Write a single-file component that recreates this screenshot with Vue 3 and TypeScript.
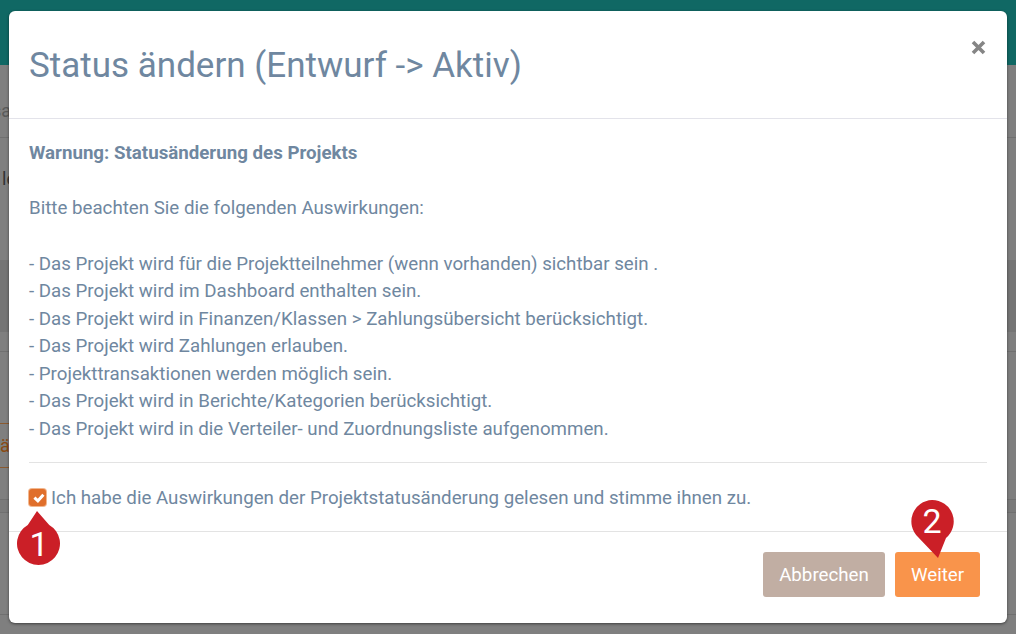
<script setup lang="ts">
const effects = [
  'Das Projekt wird für die Projektteilnehmer (wenn vorhanden) sichtbar sein .',
  'Das Projekt wird im Dashboard enthalten sein.',
  'Das Projekt wird in Finanzen/Klassen > Zahlungsübersicht berücksichtigt.',
  'Das Projekt wird Zahlungen erlauben.',
  'Projekttransaktionen werden möglich sein.',
  'Das Projekt wird in Berichte/Kategorien berücksichtigt.',
  'Das Projekt wird in die Verteiler- und Zuordnungsliste aufgenommen.',
]
</script>

<template>
  <div class="page">
    <div class="topbar"></div>
    <div class="backdrop-text">
      <div class="row row-a"><span>sa</span></div>
      <div class="row row-b"><span>le</span></div>
      <div class="row row-c"></div>
      <div class="row row-d"></div>
      <div class="row row-e"><span>ä</span></div>
      <div class="row row-f"></div>
      <div class="row row-g"></div>
      <div class="row row-h"></div>
    </div>

    <div class="modal">
      <header class="head">
        <h1>Status ändern (Entwurf -&gt; Aktiv)</h1>
        <svg class="close" viewBox="0 0 15 15" width="15" height="15">
          <path d="M2 2 L13 13 M13 2 L2 13" stroke="#858585" stroke-width="3.6" fill="none" />
        </svg>
      </header>

      <section class="body">
        <p class="warn">Warnung: Statusänderung des Projekts</p>
        <p class="line gap">Bitte beachten Sie die folgenden Auswirkungen:</p>
        <p v-for="item in effects" :key="item" class="line">- {{ item }}</p>
        <hr />
        <label class="check">
          <span class="box">
            <svg viewBox="0 0 17 17" width="17" height="17">
              <path d="M5.4 8.6 L8.9 11.8 L14.4 5.8" stroke="#fff" stroke-width="3" fill="none" />
            </svg>
          </span>
          <span>Ich habe die Auswirkungen der Projektstatusänderung gelesen und stimme ihnen zu.</span>
        </label>
      </section>

      <footer class="foot">
        <button class="btn cancel">Abbrechen</button>
        <button class="btn next">Weiter</button>
      </footer>

      <div class="pin pin-one">
        <svg viewBox="0 0 44 56" width="44" height="56">
          <path d="M20 1 L32.25 14.9 A21.5 21.5 0 1 1 10.75 14.9 Z" fill="#cb1f27" />
        </svg>
        <span>1</span>
      </div>
      <div class="pin pin-two">
        <svg viewBox="0 0 44 60" width="44" height="60">
          <path d="M22 1 A21.5 21.5 0 0 1 36 39 L28 59 L8 38 A21.5 21.5 0 0 1 22 1 Z" fill="#cb1f27" />
        </svg>
        <span>2</span>
      </div>
    </div>
  </div>
</template>

<style scoped>
.page {
  position: relative;
  width: 1016px;
  height: 634px;
  overflow: hidden;
  background: #7f7f7f;
  font-family: Roboto, "Liberation Sans", sans-serif;
}
.topbar {
  height: 65px;
  background: #106864;
}
.backdrop-text {
  color: #4a4a4a;
  font-size: 18px;
}
.row {
  border-bottom: 1px solid #707070;
  overflow: hidden;
}
.row span {
  display: block;
}
.row-a {
  height: 73px;
  padding-top: 35px;
  box-sizing: border-box;
  text-indent: -8px;
  color: #5a5a5a;
}
.row-b {
  height: 122px;
  padding-top: 30px;
  box-sizing: border-box;
  text-indent: 2px;
  color: #333;
  border-bottom: 0;
}
.row-c {
  height: 72px;
  background: #757575;
  border-bottom: 0;
}
.row-d {
  height: 19px;
}
.row-e {
  margin-top: 71px;
  height: 45px;
  border-bottom: 0;
}
.row-e span {
  width: 100px;
  height: 45px;
  padding-top: 11px;
  box-sizing: border-box;
  color: #8a4a14;
  border-top: 1px solid #8a5a30;
  border-bottom: 1px solid #8a5a30;
}
.row-f {
  height: 31px;
}
.row-g {
  height: 12px;
  background: #7a7a7a;
}
.row-h {
  height: 101px;
}
.modal {
  position: absolute;
  left: 9px;
  top: 11px;
  width: 998px;
  height: 612px;
  display: flex;
  flex-direction: column;
  background: #fff;
  border-radius: 6px;
  box-shadow: 0 1px 3px rgba(0, 0, 0, 0.5);
  color: #6f87a0;
  font-size: 18.72px;
}
.head {
  height: 108px;
  flex: none;
  box-sizing: border-box;
  padding: 0 20px;
  display: flex;
  align-items: center;
  justify-content: space-between;
  border-bottom: 1px solid #e3e3ea;
}
h1 {
  margin: 2px 0 0;
  font-size: 35px;
  font-weight: 400;
  line-height: 1.2;
}
.close {
  align-self: flex-start;
  margin-top: 29px;
  margin-right: 1px;
}
.body {
  flex: 1;
  padding: 21px 20px 0;
}
p {
  margin: 0;
  line-height: 27.5px;
}
.warn {
  font-weight: 700;
  margin-bottom: 27.9px;
}
.gap {
  margin-bottom: 27.9px;
}
hr {
  border: 0;
  border-top: 1px solid #e3e3e3;
  margin: 18.4px 0 21px;
}
.check {
  display: flex;
  align-items: center;
  gap: 5px;
  line-height: 28px;
}
.box {
  width: 17px;
  height: 17px;
  flex: none;
  display: flex;
  align-items: center;
  justify-content: center;
  background: #e06f2b;
  border-radius: 3px;
  box-shadow: 0 0 0 1px #f2b78e;
}
.foot {
  height: 92px;
  flex: none;
  box-sizing: border-box;
  border-top: 1px solid #e3e3e3;
  padding: 20px 27px 0 0;
  display: flex;
  justify-content: flex-end;
  gap: 10px;
}
.btn {
  height: 45px;
  border: 0;
  border-radius: 3px;
  color: #fff;
  font: 400 18.72px Roboto, "Liberation Sans", sans-serif;
  padding: 0;
}
.cancel {
  width: 122px;
  background: #c1aea3;
}
.next {
  width: 85px;
  background: #f9944b;
}
.pin {
  position: absolute;
  color: #fff;
  font-size: 34px;
  line-height: 1;
}
.pin span {
  position: absolute;
  left: 0;
  right: 0;
  text-align: center;
}
.pin-one {
  left: 8px;
  top: 499px;
  width: 44px;
  height: 56px;
}
.pin-one span {
  top: 17px;
}
.pin-two {
  left: 901px;
  top: 488px;
  width: 44px;
  height: 60px;
}
.pin-two span {
  top: 5px;
}
</style>

<style>
html, body {
  margin: 0;
  overflow: hidden;
}
</style>
